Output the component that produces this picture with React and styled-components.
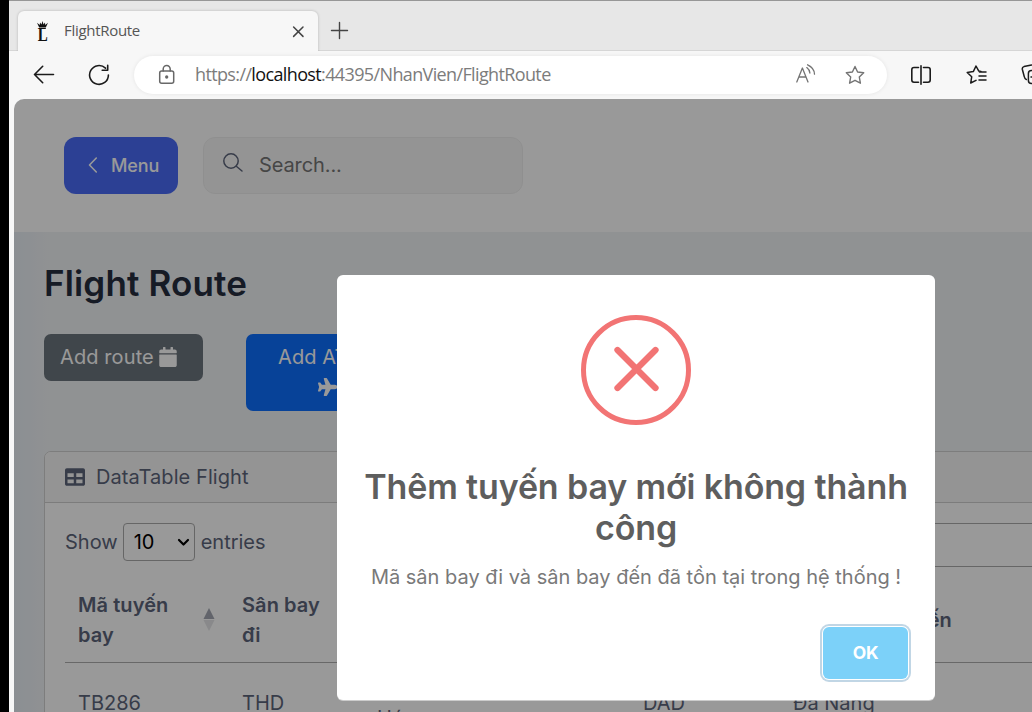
import React from "react";
import styled, { createGlobalStyle } from "styled-components";
import { FaCalendar, FaPlane, FaTable } from "react-icons/fa";

const Global = createGlobalStyle`
  *, *::before, *::after { box-sizing: border-box; }
  html, body, #root { height: 100%; }
  body { margin: 0; background: #000; overflow: hidden; }
  button, input { font: inherit; }
`;

const Browser = styled.div`
  height: 712px;
  width: 1032px;
  padding-left: 9px;
  background: #000;
  display: flex;
  flex-direction: column;
  overflow: hidden;
`;

const TabStrip = styled.div`
  height: 51px;
  flex: none;
  display: flex;
  align-items: flex-end;
  padding-left: 9px;
  background: #e7e7e7;
  border-top: 1px solid #979797;
  box-shadow: inset 0 -1px 0 #d6d6d6;
`;

const Tab = styled.div`
  position: relative;
  width: 300px;
  height: 40px;
  display: flex;
  align-items: center;
  padding: 0 11px 0 17px;
  border-radius: 6px 6px 0 0;
  background: #f7f7f7;
  box-shadow: 0 0 3px rgba(0, 0, 0, 0.22);
  clip-path: inset(-4px -4px 0 -4px);
`;

const TabTitle = styled.span`
  flex: 1;
  margin: 0 0 2px 14px;
  font: 400 15px "Open Sans", sans-serif;
  letter-spacing: -0.3px;
  color: #555;
`;

const NewTab = styled.div`
  height: 40px;
  display: flex;
  align-items: center;
  margin-left: 12px;
`;

const Toolbar = styled.div`
  height: 48px;
  flex: none;
  display: flex;
  align-items: center;
  background: #f7f7f7;
  padding-left: 23px;
  svg { flex: none; }
`;

const Address = styled.div`
  flex: none;
  width: 753px;
  height: 38px;
  margin: 0 22px 0 24px;
  padding: 0 22px 0 22px;
  display: flex;
  align-items: center;
  border-radius: 19px;
  background: #fff;
  box-shadow: 0 0 4px rgba(0, 0, 0, 0.08);
`;

const Url = styled.span`
  flex: 1;
  margin: 0 0 2px 18px;
  font: 400 18px "Open Sans", sans-serif;
  letter-spacing: -0.63px;
  color: #7c7c7c;
  b { font-weight: 400; color: #111; }
`;

const Viewport = styled.div`
  flex: 1;
  min-height: 0;
  padding-left: 5px;
  background: #f7f7f7;
`;

const Page = styled.main`
  position: relative;
  height: 613px;
  overflow: hidden;
  border-radius: 10px 0 0 0;
  background: linear-gradient(90deg, #e8eff5, #f1f3f6 36px);
  color: #5d657b;
  font: 400 20px/30px Inter, sans-serif;
`;

const Shade = styled.div`
  position: absolute;
  inset: 0;
  background: rgba(0, 0, 0, 0.4);
`;

const Header = styled.header`
  height: 133px;
  display: flex;
  gap: 25px;
  padding: 38px 0 0 50px;
  background: #fff;
`;

const MenuButton = styled.button`
  width: 114px;
  height: 57px;
  display: flex;
  align-items: center;
  gap: 12px;
  padding: 0 0 0 23px;
  border: 0;
  border-radius: 12px;
  background: #4a6cf7;
  color: #fff;
  font-size: 18px;
  font-weight: 500;
  letter-spacing: -0.15px;
  svg { margin-bottom: 1px; }
`;

const Search = styled.div`
  width: 320px;
  height: 57px;
  display: flex;
  align-items: center;
  gap: 15px;
  padding: 0 0 2px 18px;
  border: 1px solid #efefef;
  border-radius: 12px;
  background: rgba(239, 239, 239, 0.5);
  color: #757575;
  letter-spacing: -0.1px;
  svg { margin-bottom: 4px; }
`;

const Content = styled.section`
  padding: 30px 0 0 30px;
`;

const Title = styled.h1`
  margin: 0;
  font-size: 35px;
  font-weight: 600;
  line-height: 42px;
  letter-spacing: 0.15px;
  color: #262d3f;
`;

const Actions = styled.div`
  display: flex;
  align-items: flex-start;
  gap: 43px;
  height: 117px;
  margin-top: 30px;
`;

const ActionButton = styled.button`
  display: flex;
  flex-direction: ${(p) => (p.$primary ? "column" : "row")};
  align-items: flex-start;
  gap: ${(p) => (p.$primary ? "5px" : "6px")};
  width: 159px;
  height: ${(p) => (p.$primary ? "77px" : "47px")};
  padding: ${(p) => (p.$primary ? "8px 32px" : "8px 16px")};
  border: 0;
  border-radius: 7px;
  line-height: 30px;
  letter-spacing: 0.1px;
  background: ${(p) => (p.$primary ? "#0d6efd" : "#6c757d")};
  color: #fff;
  svg { margin: ${(p) => (p.$primary ? "0 0 0 40px" : "5px 0 0 -2px")}; }
`;

const Card = styled.div`
  width: 1300px;
  border: 1px solid #d0d0d0;
  border-radius: 7px;
  background: #fff;
`;

const CardHeader = styled.div`
  height: 51px;
  display: flex;
  align-items: center;
  gap: 11px;
  padding-left: 20px;
  border-bottom: 1px solid #cfcfcf;
  background: #f7f7f7;
  border-radius: 6px 6px 0 0;
  letter-spacing: 0.08px;
`;

const Controls = styled.div`
  display: flex;
  align-items: flex-start;
  gap: 6px;
  height: 65px;
  padding: 20px 20px 0;
  line-height: 38px;
  > span:first-child { margin-right: -1px; }
`;

const PageSize = styled.span`
  width: 72px;
  height: 38px;
  display: flex;
  align-items: center;
  justify-content: space-between;
  padding: 0 4px 0 10px;
  border: 1px solid #aaa;
  border-radius: 4px;
  color: #000;
`;

const Filter = styled.span`
  width: 420px;
  height: 44px;
  margin-left: 440px;
  border: 1px solid #aaa;
  border-radius: 4px;
`;

const Table = styled.table`
  width: 1240px;
  margin-left: 20px;
  table-layout: fixed;
  border-collapse: collapse;
  th, td { padding: 0 0 0 13px; text-align: left; vertical-align: middle; }
  th { height: 94px; padding-top: 10px; font-weight: 600; letter-spacing: 0.08px; border-bottom: 1px solid #adadad; }
  td { height: 82px; }
`;

const HeadCell = styled.div`
  display: flex;
  align-items: center;
  justify-content: space-between;
  padding-right: 14px;
`;

const Dialog = styled.div`
  position: absolute;
  left: 323px;
  top: 176px;
  width: 598px;
  height: 425px;
  display: flex;
  flex-direction: column;
  align-items: center;
  padding: 40px 24px 0;
  border-radius: 6px;
  background: #fff;
  box-shadow: 0 1px 0 rgba(255, 255, 255, 0.5);
`;

const DialogTitle = styled.h2`
  margin: 41px 0 0;
  font-size: 34px;
  line-height: 41px;
  font-weight: 600;
  letter-spacing: -0.13px;
  color: #5e5e5e;
  text-align: center;
  white-space: nowrap;
`;

const DialogText = styled.p`
  margin: 14px 0 0;
  font-size: 20px;
  line-height: 30px;
  font-weight: 400;
  color: #797979;
  white-space: nowrap;
`;

const OkButton = styled.button`
  align-self: flex-end;
  width: 85px;
  height: 52px;
  margin: 35px 3px 0 0;
  padding: 0;
  border: 0;
  border-radius: 6px;
  background: #7cd1f9;
  color: #fff;
  font-size: 17.5px;
  font-weight: 700;
  letter-spacing: -0.2px;
  box-shadow: 0 0 0 1px #fff, 0 0 0 3px rgba(43, 114, 165, 0.29);
`;

const Stroke = ({ w, h, color = "#1b1b1b", width = 1.5, children, ...rest }) => (
  <svg width={w} height={h} viewBox={`0 0 ${w} ${h}`} fill="none" stroke={color}
    strokeWidth={width} strokeLinecap="round" strokeLinejoin="round" {...rest}>
    {children}
  </svg>
);

const Favicon = () => (
  <svg width="15" height="21" viewBox="0 0 15 21">
    <path d="M2 1.8 4.8 4 5 1.4 6.5 3.6 7.5 0 8.5 3.6 10 1.4 10.2 4 13 1.8 10.8 6.4H4.2ZM4.2 7H10.8V8H4.2Z" fill="#111" />
    <text x="2.7" y="20.2" fontFamily="Liberation Serif, serif" fontWeight="700" fontSize="18" textLength="10" lengthAdjust="spacingAndGlyphs" fill="#111">L</text>
  </svg>
);

const STAR = "M10 1.5 12.6 7 18.7 7.8 14.3 12 15.4 18.2 10 15.3 4.6 18.2 5.7 12 1.3 7.8 7.4 7Z";

export default function App() {
  return (
    <Browser>
      <Global />
      <TabStrip>
        <Tab>
          <Favicon />
          <TabTitle>FlightRoute</TabTitle>
          <Stroke w={18} h={18} color="#444" width={1.5}><path d="M4.6 5 14 14.4M14 5 4.6 14.4" /></Stroke>
        </Tab>
        <NewTab>
          <Stroke w={20} h={20} color="#444" width={1.4}><path d="M1.5 9.5H17.5M9.5 1.5V17.5" /></Stroke>
        </NewTab>
      </TabStrip>
      <Toolbar>
        <Stroke w={24} h={20} width={1.6}><path d="M21.5 9.5H2.5M10.7 1.3 2.5 9.5 10.7 17.7" /></Stroke>
        <Stroke w={22} h={22} width={1.6} style={{ marginLeft: 32 }}>
          <path d="M17.5 4.2A9.4 9.4 0 1 0 20.4 11M19.7 1.4V6.2H14.2" />
        </Stroke>
        <Address>
          <Stroke w={21} h={22} color="#686868" width={1.5}>
            <rect x="3.7" y="7" width="14" height="12.3" rx="2" />
            <path d="M7.2 7V5a3.5 3.5 0 0 1 7 0V7" />
            <circle cx="10.7" cy="13" r=".9" fill="#686868" />
          </Stroke>
          <Url>https://<b>localhost</b>:44395/NhanVien/FlightRoute</Url>
          <Stroke w={22} h={22} color="#747474" width={1.3}>
            <path d="M2.8 18 8.4 4 14 18M4.8 13H12M12.8 3.6C14.6 5 15.8 7 15.9 9M13.6 .8C17.8 2.7 20.4 6.2 20.5 10.2" />
          </Stroke>
          <Stroke w={20} h={20} color="#747474" width={1.4} style={{ marginLeft: 29 }}><path d={STAR} /></Stroke>
        </Address>
        <Stroke w={24} h={20} width={1.6}>
          <path d="M9.5 2.5H5Q2.8 2.5 2.8 4.7V15Q2.8 17.2 5 17.2H9.5M14.5 2.5H19Q21.2 2.5 21.2 4.7V15Q21.2 17.2 19 17.2H14.5M12 .8V19.2" />
        </Stroke>
        <Stroke w={22} h={20} width={1.5} style={{ marginLeft: 33 }}>
          <path d="M15 6.4 12.8 6.1 10 1 7.3 6.6 1.2 7.5 5.7 11.8 4.7 18 10 15.4M13.5 7H20M13 11H20M13 15H20" />
        </Stroke>
        <Stroke w={24} h={22} width={1.5} style={{ marginLeft: 33 }}>
          <path d="M5.3 15.5C3.5 14.9 3.5 13.6 3.1 12L1.3 5.2Q1 3.2 3 2.6L10.5 1.1" />
          <rect x="7.4" y="6.5" width="13" height="13" rx="3" /><path d="M10 13H17M13.5 9.5V16.5" />
        </Stroke>
      </Toolbar>
      <Viewport>
        <Page>
          <Header>
            <MenuButton>
              <Stroke w={12} h={18} color="#fff" width={1.6}><path d="M9.3 2 2.5 9 9.3 16" /></Stroke>
              Menu
            </MenuButton>
            <Search>
              <Stroke w={22} h={22} color="#5d657b" width={1.5}><circle cx="9" cy="9" r="7.2" /><path d="M14.3 14.2 20 19" /></Stroke>
              Search...
            </Search>
          </Header>
          <Content>
            <Title>Flight Route</Title>
            <Actions>
              <ActionButton><span>Add route</span><FaCalendar size={20} /></ActionButton>
              <ActionButton $primary><span>Add AT</span><FaPlane size={20} /></ActionButton>
            </Actions>
            <Card>
              <CardHeader><FaTable size={20} />DataTable Flight</CardHeader>
              <Controls>
                <span>Show</span>
                <PageSize>10
                  <Stroke w={13} h={10} color="#000" width={2.2}><path d="M2 3 6.5 7.5 11 3" /></Stroke>
                </PageSize>
                <span>entries</span>
                <Filter />
              </Controls>
              <Table>
                <colgroup>
                  <col style={{ width: 164 }} /><col style={{ width: 135 }} /><col style={{ width: 266 }} />
                  <col style={{ width: 150 }} /><col />
                </colgroup>
                <thead>
                  <tr>
                    <th>
                      <HeadCell>
                        <span>Mã tuyến<br />bay</span>
                        <svg width="12" height="24" viewBox="0 0 12 24">
                          <path d="M6 0 11.5 11H.5Z" fill="#a3a7b3" />
                          <path d="M.5 12H11.5L6 23Z" fill="#e4e5e8" />
                        </svg>
                      </HeadCell>
                    </th>
                    <th>Sân bay<br />đi</th>
                    <th>Tên sân bay đi</th>
                    <th>Sân bay<br />đến</th>
                    <th>Tên sân bay đến</th>
                  </tr>
                </thead>
                <tbody>
                  <tr>
                    <td>TB286</td><td>THD</td><td>Thanh<br />Hóa</td><td>DAD</td><td>Đà Nẵng</td>
                  </tr>
                </tbody>
              </Table>
            </Card>
          </Content>
          <Shade />
          <Dialog role="alertdialog">
            <svg width="110" height="110" viewBox="0 0 110 110" fill="none" stroke="#f27474" strokeLinecap="round">
              <circle cx="55" cy="55" r="52.5" strokeWidth="5" />
              <path d="M36.5 35 74.5 73M74.5 35 36.5 73" strokeWidth="6.3" />
            </svg>
            <DialogTitle>Thêm tuyến bay mới không thành<br />công</DialogTitle>
            <DialogText>Mã sân bay đi và sân bay đến đã tồn tại trong hệ thống !</DialogText>
            <OkButton>OK</OkButton>
          </Dialog>
        </Page>
      </Viewport>
    </Browser>
  );
}
